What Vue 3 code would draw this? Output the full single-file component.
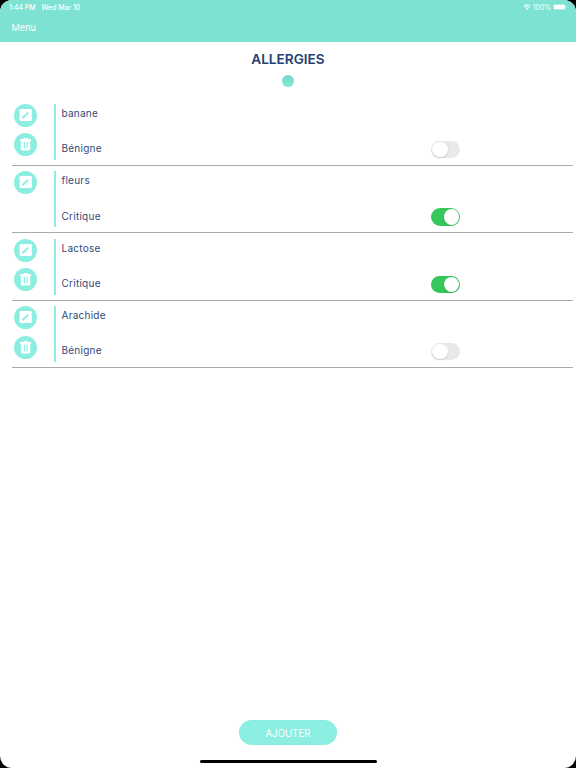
<script setup>
import { ref } from 'vue';

const allergies = ref([
  { id: 1, name: 'banane', critical: false, removable: true },
  { id: 2, name: 'fleurs', critical: true, removable: false },
  { id: 3, name: 'Lactose', critical: true, removable: true },
  { id: 4, name: 'Arachide', critical: false, removable: true }
]);

const toggle = (item) => {
  item.critical = !item.critical;
};

const remove = (id) => {
  allergies.value = allergies.value.filter(item => item.id !== id);
};
</script>

<template>
  <div class="device">
    <div class="screen">
      <header>
        <div class="status-bar">
          <span class="time">1:44 PM</span>
          <span>Wed Mar 10</span>
          <div class="status-right">
            <svg class="wifi" viewBox="0 0 16 12">
              <path d="M1 4.4a10 10 0 0 1 14 0M3.4 7a6.6 6.6 0 0 1 9.2 0" fill="none" stroke="#fff" stroke-width="2" />
              <path d="M8 11.8 5.4 9.1a3.7 3.7 0 0 1 5.2 0z" fill="#fff" />
            </svg>
            <span class="percent">100%</span>
            <svg class="battery" viewBox="0 0 28 12">
              <rect x="0.5" y="0.5" width="24" height="11" rx="3.5" fill="none" stroke="#fff" stroke-opacity="0.5" />
              <rect x="1.5" y="1.5" width="22" height="9" rx="2" fill="#fff" />
              <path d="M26 4a2.2 2.2 0 0 1 0 4z" fill="#fff" fill-opacity="0.6" />
            </svg>
          </div>
        </div>
        <a class="menu">Menu</a>
      </header>

      <main>
        <h1>ALLERGIES</h1>
        <div class="dot"></div>

        <ul class="list">
          <li v-for="item in allergies" :key="item.id" class="row">
            <div class="actions">
              <button class="round">
                <svg viewBox="0 0 23 23">
                  <rect x="5.6" y="5" width="12.2" height="12" rx="1.2" fill="#fff" />
                  <path d="M8.2 14.5v-1.4l5.4-5.2 1.3 1.3-5.3 5.3z" fill="#8ceee0" />
                </svg>
              </button>
              <button v-if="item.removable" class="round" @click="remove(item.id)">
                <svg viewBox="0 0 23 23">
                  <path d="M6.2 6h2.9l.8-.9h3.4l.8.9H17v2H6.2z" fill="#fff" />
                  <path d="M6.9 7.8h9.4V16a1.5 1.5 0 0 1-1.5 1.5H8.4A1.5 1.5 0 0 1 6.9 16z" fill="#fff" />
                  <path d="M10.4 8.8v6.4M12.9 8.8v6.4" stroke="#8ceee0" stroke-width="1.1" />
                </svg>
              </button>
            </div>
            <div class="details">
              <span>{{ item.name }}</span>
              <span>{{ item.critical ? 'Critique' : 'Bénigne' }}</span>
            </div>
            <button class="switch" :class="{ on: item.critical }" @click="toggle(item)">
              <span class="knob"></span>
            </button>
          </li>
        </ul>
      </main>

      <footer>
        <button class="add">AJOUTER</button>
        <div class="home-indicator"></div>
      </footer>
    </div>
  </div>
</template>

<style>
body {
  margin: 0;
  background: #000;
}
</style>

<style scoped>
.device {
  width: 576px;
  height: 768px;
  background: #000;
  font-family: Inter, "Liberation Sans", sans-serif;
}

.screen {
  display: flex;
  flex-direction: column;
  height: 100%;
  background: #fff;
  border-radius: 12px;
  overflow: hidden;
}

header {
  box-sizing: border-box;
  height: 42px;
  background: #7de2d1;
  color: #fff;
}

.status-bar {
  display: flex;
  align-items: center;
  height: 14px;
  padding: 0 9px;
  font-size: 6.9px;
  font-weight: 500;
}

.time {
  margin-right: 6px;
}

.status-right {
  display: flex;
  align-items: center;
  margin-left: auto;
}

.wifi {
  width: 8px;
  height: 6px;
}

.percent {
  margin: 0 2px;
  font-weight: 400;
}

.battery {
  width: 14px;
  height: 6px;
}

.menu {
  display: block;
  padding-left: 11.5px;
  font-size: 9.2px;
  line-height: 28px;
}

main {
  flex: 1;
}

h1 {
  margin: 8px 0 0;
  text-align: center;
  font-size: 13.6px;
  line-height: 18px;
  font-weight: 600;
  color: #243f70;
}

.dot {
  width: 12px;
  height: 12px;
  margin: 7px auto 0;
  border-radius: 50%;
  background: linear-gradient(#74d9c7, #84e8d8);
}

.list {
  margin: 11px 3px 0 12px;
  padding: 0;
  list-style: none;
}

.row {
  display: flex;
  box-sizing: border-box;
  height: 67.4px;
  padding: 5.5px 113px 5px 2px;
  border-bottom: 1px solid #aaa;
}

.row:first-child {
  height: 67.8px;
}

.actions {
  display: flex;
  flex-direction: column;
  gap: 6.7px;
  width: 40px;
}

button {
  padding: 0;
  border: none;
  font-family: inherit;
}

.round {
  width: 23px;
  height: 23px;
  border-radius: 50%;
  background: #8ceee0;
}

.round svg {
  display: block;
  width: 23px;
  height: 23px;
}

.details {
  display: flex;
  flex-direction: column;
  justify-content: space-between;
  flex: 1;
  padding: 2px 0 3.5px 5.5px;
  border-left: 2px solid #8ceee0;
  font-size: 10px;
  line-height: 15px;
  letter-spacing: 0.25px;
  color: #304a78;
}

.switch {
  display: flex;
  align-self: flex-end;
  box-sizing: border-box;
  width: 29px;
  height: 17.5px;
  margin-bottom: 1.5px;
  padding: 1px;
  border-radius: 9px;
  background: #e9e9eb;
}

.switch.on {
  justify-content: flex-end;
  background: #35c75a;
}

.knob {
  width: 15.5px;
  height: 15.5px;
  border-radius: 50%;
  background: #fff;
  box-shadow: 0 1px 2px rgba(0, 0, 0, 0.15);
}

footer {
  display: flex;
  flex-direction: column;
  align-items: center;
}

.add {
  width: 98px;
  height: 25px;
  padding-top: 1px;
  border-radius: 12.5px;
  background: #8ceee0;
  color: #fff;
  font-size: 9.7px;
}

.home-indicator {
  width: 177px;
  height: 3px;
  margin: 15px 0 5px;
  border-radius: 2px;
  background: #000;
}
</style>
